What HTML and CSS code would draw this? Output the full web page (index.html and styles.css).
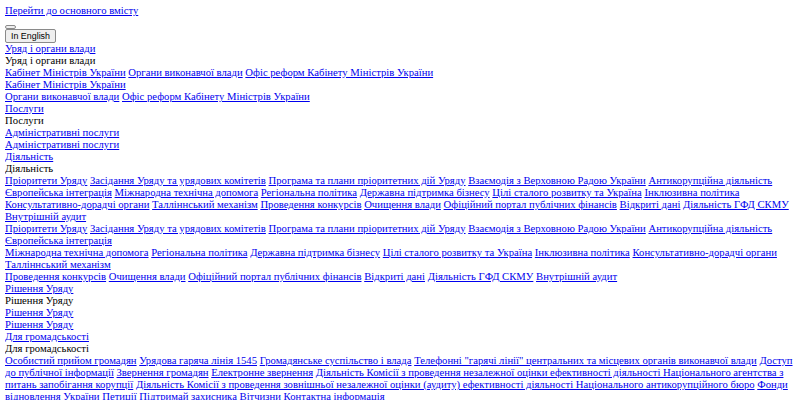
FILE: index.html
```html
<!DOCTYPE html>
<html lang="uk">
<head>
<meta charset="utf-8">
<title>Урядовий портал</title>
<link rel="stylesheet" href="styles.css">
</head>
<body class="page">
<div class="skip"><a href="#main">Перейти до основного вмісту</a></div>
<div class="row"><button class="menu-toggle" type="button"></button></div>
<div class="row"><button class="lang" type="button">In English</button></div>
<nav class="nav">
  <div><a href="#">Уряд і органи влади</a></div>
  <div>Уряд і органи влади</div>
  <div><a href="#">Кабінет Міністрів України</a> <a href="#">Органи виконавчої влади</a> <a href="#">Офіс реформ Кабінету Міністрів України</a></div>
  <div><a href="#">Кабінет Міністрів України</a></div>
  <div><a href="#">Органи виконавчої влади</a> <a href="#">Офіс реформ Кабінету Міністрів України</a></div>
  <div><a href="#">Послуги</a></div>
  <div>Послуги</div>
  <div><a href="#">Адміністративні послуги</a></div>
  <div><a href="#">Адміністративні послуги</a></div>
  <div><a href="#">Діяльність</a></div>
  <div>Діяльність</div>
  <div><a href="#">Пріоритети Уряду</a> <a href="#">Засідання Уряду та урядових комітетів</a> <a href="#">Програма та плани пріоритетних дій Уряду</a> <a href="#">Взаємодія з Верховною Радою України</a> <a href="#">Антикорупційна діяльність</a> <a href="#">Європейська інтеграція</a> <a href="#">Міжнародна технічна допомога</a> <a href="#">Регіональна політика</a> <a href="#">Державна підтримка бізнесу</a> <a href="#">Цілі сталого розвитку та Україна</a> <a href="#">Інклюзивна політика</a> <a href="#">Консультативно-дорадчі органи</a> <a href="#">Талліннський механізм</a> <a href="#">Проведення конкурсів</a> <a href="#">Очищення влади</a> <a href="#">Офіційний портал публічних фінансів</a> <a href="#">Відкриті дані</a> <a href="#">Діяльність ГФД СКМУ</a> <a href="#">Внутрішній аудит</a></div>
  <div><a href="#">Пріоритети Уряду</a> <a href="#">Засідання Уряду та урядових комітетів</a> <a href="#">Програма та плани пріоритетних дій Уряду</a> <a href="#">Взаємодія з Верховною Радою України</a> <a href="#">Антикорупційна діяльність</a></div>
  <div><a href="#">Європейська інтеграція</a></div>
  <div><a href="#">Міжнародна технічна допомога</a> <a href="#">Регіональна політика</a> <a href="#">Державна підтримка бізнесу</a> <a href="#">Цілі сталого розвитку та Україна</a> <a href="#">Інклюзивна політика</a> <a href="#">Консультативно-дорадчі органи</a></div>
  <div><a href="#">Талліннський механізм</a></div>
  <div><a href="#">Проведення конкурсів</a> <a href="#">Очищення влади</a> <a href="#">Офіційний портал публічних фінансів</a> <a href="#">Відкриті дані</a> <a href="#">Діяльність ГФД СКМУ</a> <a href="#">Внутрішній аудит</a></div>
  <div><a href="#">Рішення Уряду</a></div>
  <div>Рішення Уряду</div>
  <div><a href="#">Рішення Уряду</a></div>
  <div><a href="#">Рішення Уряду</a></div>
  <div><a href="#">Для громадськості</a></div>
  <div>Для громадськості</div>
  <div><a href="#">Особистий прийом громадян</a> <a href="#">Урядова гаряча лінія 1545</a> <a href="#">Громадянське суспільство і влада</a> <a href="#">Телефонні "гарячі лінії" центральних та місцевих органів виконавчої влади</a> <a href="#">Доступ до публічної інформації</a> <a href="#">Звернення громадян</a> <a href="#">Електронне звернення</a> <a href="#">Діяльність Комісії з проведення незалежної оцінки ефективності діяльності Національного агентства з питань запобігання корупції</a> <a href="#">Діяльність Комісії з проведення зовнішньої незалежної оцінки (аудиту) ефективності діяльності Національного антикорупційного бюро</a> <a href="#">Фонди відновлення України</a> <a href="#">Петиції</a> <a href="#">Підтримай захисника Вітчизни</a> <a href="#">Контактна інформація</a></div>
</nav>
</body>
</html>
```
FILE: styles.css
```css
html, body {
  background: #ffffff;
}
.page {
  margin: 5px;
  font-family: "Liberation Serif", "Times New Roman", serif;
  font-size: 10.667px;
  line-height: 12px;
  color: #000000;
}
.page a {
  color: #0000ee;
}
.skip {
  margin-bottom: 8px;
}
.row {
  display: flex;
}
.menu-toggle {
  width: 11px;
  height: 4px;
  padding: 0;
  margin: 0;
  border: 1px solid #8a8a8a;
  border-radius: 2px;
  background: #efefef;
}
.lang {
  height: 14px;
  padding: 0 5px;
  margin: 0;
  font-family: "Liberation Sans", Arial, sans-serif;
  font-size: 8.9px;
  line-height: 12px;
  color: #000000;
  border: 1px solid #8a8a8a;
  border-radius: 2px;
  background: #efefef;
}
.nav {
  display: block;
}
```
